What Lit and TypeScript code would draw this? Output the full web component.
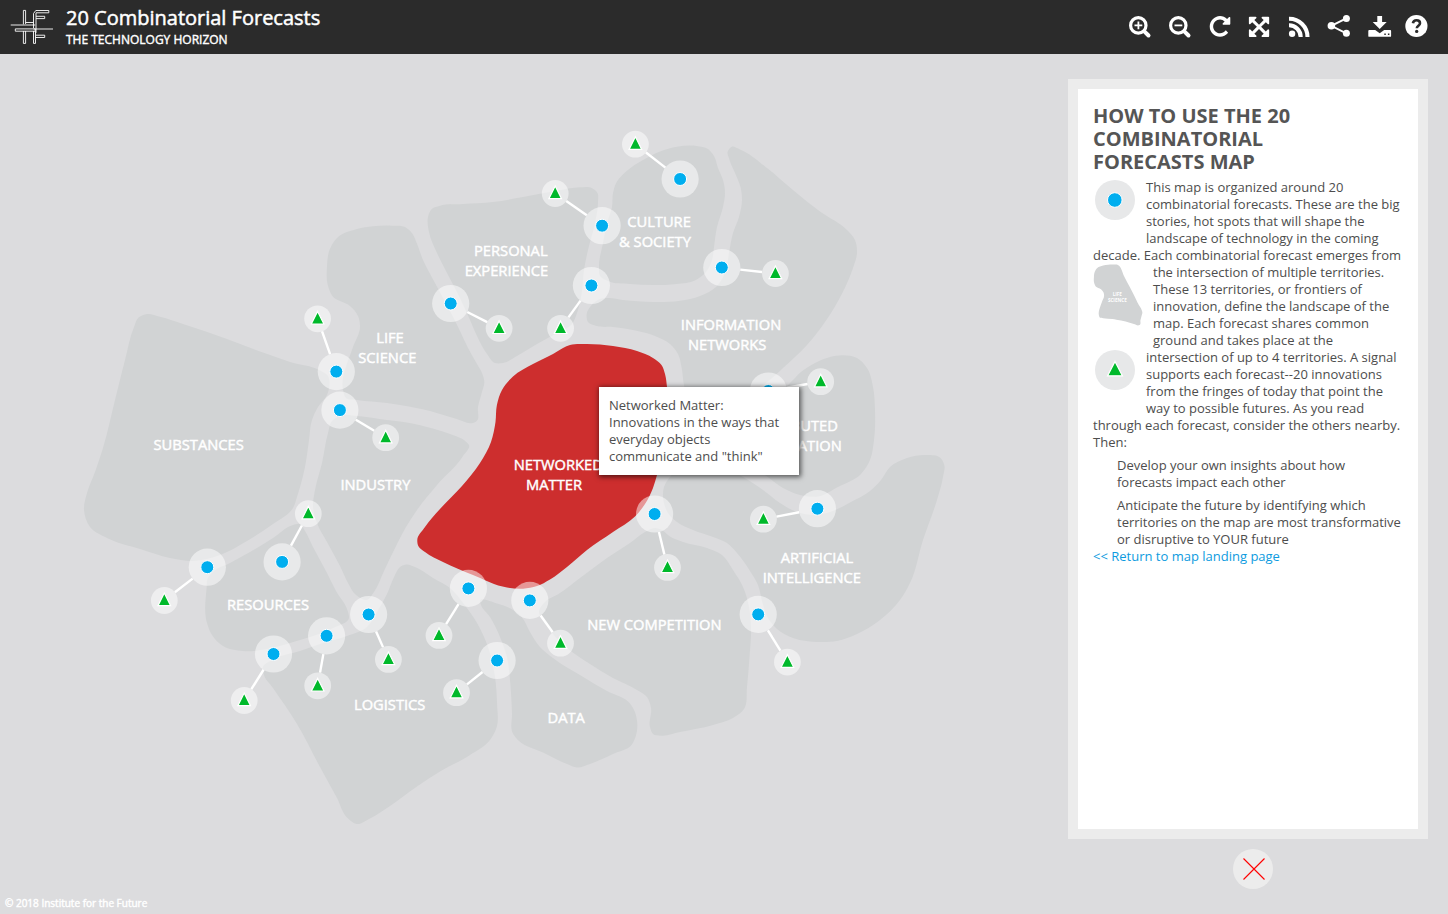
import { LitElement, html, svg, css } from "lit";
import { customElement } from "lit/decorators.js";

type Point = [number, number];

/** Closed smooth curve through the points, tangents scaled to segment length. */
function blob(flat: number[]): string {
  const p: Point[] = [];
  for (let i = 0; i < flat.length; i += 2) p.push([flat[i], flat[i + 1]]);
  const n = p.length;
  const dist = (a: Point, b: Point) => Math.hypot(b[0] - a[0], b[1] - a[1]) || 1;
  const tangent = p.map((c, i) => {
    const a = p[(i + n - 1) % n];
    const b = p[(i + 1) % n];
    const da = dist(a, c);
    const db = dist(c, b);
    const t = [0, 1].map(
      (k) => (((c[k] - a[k]) / da) * db + ((b[k] - c[k]) / db) * da) / (da + db),
    );
    return t as Point;
  });
  let d = `M${p[0][0]} ${p[0][1]}`;
  for (let i = 0; i < n; i++) {
    const j = (i + 1) % n;
    const l = dist(p[i], p[j]) / 3;
    const c = [
      p[i][0] + tangent[i][0] * l,
      p[i][1] + tangent[i][1] * l,
      p[j][0] - tangent[j][0] * l,
      p[j][1] - tangent[j][1] * l,
      p[j][0],
      p[j][1],
    ].map((v) => v.toFixed(1));
    d += `C${c.join(" ")}`;
  }
  return d + "Z";
}

const lifeScience = blob([
  391.7, 225.7, 405, 227, 411.7, 232.7, 416.7, 243, 423, 260, 435, 283, 451, 313, 460, 331, 468, 348, 477, 364,
  482, 373, 484.3, 381.7, 481.7, 393, 478, 407, 476.7, 421, 472.7, 423, 456.7, 419, 430, 411, 400, 405, 387, 403,
  357, 400, 346, 398, 343, 390, 343, 378, 345, 370, 353, 347, 360, 326, 358, 316, 350, 306, 333, 296.7, 327.5, 284,
  327, 267, 329.5, 250, 338, 237, 357, 229, 373, 226.3,
]);

const territories: string[] = [
  blob([
    146, 314.2, 160, 316.7, 183, 324, 227, 339, 263, 352.5, 290, 362, 320, 370.5, 328, 376, 329.5, 385, 327, 395,
    318, 407, 312, 420, 309, 440, 305, 467, 297, 497, 293, 508, 273, 524, 247, 541, 220, 555, 193, 561, 170, 558,
    140, 549, 107, 538, 90, 527, 84, 510, 87, 493, 95, 472, 103, 448, 115, 400, 125, 360, 134, 327, 138.5, 317.5,
  ]),
  lifeScience,
  blob([
    428, 217, 431.7, 209, 440, 205.7, 463, 204, 493, 202, 523, 197, 557, 190.7, 580, 187.3, 591.7, 188,
    597.5, 193, 598, 202, 595, 223, 588, 250, 584, 270, 581.7, 293, 577, 313, 572, 324, 557, 333, 537, 344,
    517, 356, 503, 363, 495, 363, 487, 354, 477, 336, 470, 320, 460, 298, 447, 273, 437, 253, 429, 232,
  ]),
  blob([
    696.7, 146, 708, 149, 714, 156, 718, 168, 723, 180, 725, 193, 723, 207, 717, 227, 714, 247, 712, 260, 706, 272,
    695, 280.5, 677, 284, 653, 285, 630, 284, 608, 281, 600, 276, 599, 267, 603, 243, 608, 220, 612, 207, 613, 193,
    616.7, 182, 626.7, 171, 643, 160, 660, 151.5, 677, 146.7,
  ]),
  blob([
    731.7, 146.7, 740, 149.5, 767, 168, 793, 190, 820, 211.5, 847, 230, 855, 240, 857, 253, 853, 268, 843, 291.7,
    825, 322, 807, 345, 783, 368, 767, 382, 735, 398, 700, 400, 687, 396, 684, 385, 681.5, 367, 678, 354,
    670, 344, 655, 336, 633, 330, 613, 327, 597, 326, 588, 322, 586.7, 314, 591.7, 305, 600, 299, 608, 298,
    623, 300, 653, 302, 680, 300.7, 700, 296, 716, 287, 725, 273, 729, 253, 733, 233, 739, 217, 742, 200,
    740.5, 187, 735, 173, 729.5, 160, 727.7, 151.5,
  ]),
  blob([
    843, 355.3, 857, 358, 867, 368, 873, 387, 875, 410, 874, 440, 870, 460, 861, 474, 838, 487, 818, 496.5,
    800, 495, 783, 488, 765, 475, 740, 462, 700, 450, 690, 430, 700, 415, 740, 408, 775, 397, 791, 382, 801, 372,
    815, 363, 830, 357,
  ]),
  blob([
    670, 477, 664, 487, 663.5, 501, 668, 513, 677, 522, 693, 530, 713, 537, 727, 543, 737, 553, 750, 571, 758, 585,
    762.5, 603, 768, 618, 777, 629, 793, 638, 820, 642, 837, 641, 857, 634, 880, 620, 900, 600, 910, 583, 923, 540,
    937, 500, 943, 477, 944.3, 465, 940, 457.5, 927, 455, 907, 458, 890, 467, 881, 480, 870, 491, 850, 502.5,
    830, 512, 817, 515, 797, 512, 780, 503, 763, 490, 743, 477, 715, 465, 685, 465,
  ]),
  blob([
    655, 528, 645, 532, 630, 543, 607, 558, 580, 578, 560, 593, 545, 602, 539, 611, 545, 623, 553, 634, 567, 648,
    590, 664, 613, 678, 637, 690, 647, 697, 651, 708, 650, 727, 653, 734, 661, 735.7, 680, 732, 713, 725, 733, 718,
    744, 709, 747, 687, 749.5, 657, 751, 627, 749, 607, 743, 587, 733, 570, 722, 555, 707, 548, 683, 542, 670, 536.5,
    662, 530,
  ]),
  blob([
    480, 601, 497, 603.5, 513, 610, 521.7, 617, 530, 632, 540, 647, 553, 658, 580, 675, 607, 691, 630, 703.5,
    634.5, 711, 635.5, 737, 631.5, 745, 613, 754, 590, 764, 577, 767.5, 567, 764, 543, 752.5, 519, 741, 512.7, 733,
    512, 713, 510, 680, 507, 657, 500, 637, 490, 617, 481, 605,
  ]),
  blob([
    406.7, 564.5, 415, 567, 433, 578, 450, 588, 463, 603, 477, 623, 488, 647, 495, 677, 497, 703, 496.7, 727,
    490, 740, 470, 755, 440, 771.5, 417, 786.5, 390, 806, 370, 818.5, 356.7, 824, 347.5, 818, 337, 798, 320, 767,
    297, 724, 273, 688, 264, 675, 263, 667, 272, 660, 300, 651, 323, 643, 347, 636, 367, 627, 377, 612, 387, 594,
    395, 575, 400, 567,
  ]),
  blob([
    206.7, 587, 207, 623, 212, 635, 223, 646, 243, 651, 267, 649, 290, 643, 310, 637, 333, 628, 349, 618, 347, 609,
    336, 591, 327, 573, 313, 547, 305, 531, 300, 524, 293, 525, 273, 538, 250, 552, 230, 563, 214, 571, 207.5, 579,
  ]),
  blob([
    357, 416, 340, 416, 332, 421, 328, 433, 322, 463, 315, 490, 313, 507, 317, 523, 327, 542, 340, 566, 348, 583,
    356, 595, 367, 600, 374, 592, 384, 571, 398, 542, 406, 527, 417, 510, 437, 485, 463, 456, 469, 445, 466, 441.7,
    450, 434, 427, 427, 400, 421.5, 387, 420,
  ]),
];

const networkedMatter = blob([
  570, 345, 587, 344, 613, 346, 637, 351, 653, 358, 661.5, 365, 665, 374, 667, 387, 667, 430, 657, 475, 653, 488,
  645, 504, 635, 516.5, 613, 532, 587, 550, 567, 567, 550, 579.5, 537, 586, 523, 588.7, 507, 587.5, 473, 575,
  443, 562, 425, 552, 418.3, 546, 417.3, 540, 425, 527, 440, 509, 462, 486, 480, 463, 491, 442, 495.5, 422,
  496.9, 405, 502, 390, 513, 376.5, 533, 364, 553, 354, 563, 348,
]);

/** Forecast x, y followed by its signal's x, y. */
const pairs: number[][] = [
  [336.3, 371.6, 317.6, 318.8],
  [339.9, 410.1, 385.7, 437.7],
  [282.1, 561.9, 308.3, 513.7],
  [207.3, 567.2, 164.3, 600.5],
  [450.7, 303.5, 499.1, 328.3],
  [602.1, 225.7, 555.2, 193.5],
  [591.4, 285.5, 560.6, 328.3],
  [680.1, 179, 635.4, 144.2],
  [721.8, 267.5, 775.4, 273.5],
  [768.3, 391, 820.7, 381.7],
  [817.4, 508.7, 763.4, 519.2],
  [654.6, 514, 667.5, 567.4],
  [758.2, 614.4, 787.4, 662.1],
  [529.8, 600.4, 560.5, 643.2],
  [468.4, 588.4, 439, 635.4],
  [497.1, 660.5, 456.5, 692.7],
  [368.6, 614.5, 388.4, 659.4],
  [326.6, 635.8, 317.7, 685.8],
  [273.5, 654, 244.2, 700.5],
];

const labels: [string, number, number][] = [
  ["SUBSTANCES", 198.6, 450],
  ["LIFE", 390, 343],
  ["SCIENCE", 387.3, 363],
  ["INDUSTRY", 375.4, 490],
  ["PERSONAL", 510.8, 256],
  ["EXPERIENCE", 506.4, 276],
  ["CULTURE", 659, 227],
  ["& SOCIETY", 655, 247],
  ["INFORMATION", 731, 330],
  ["NETWORKS", 727.2, 350],
  ["NETWORKED", 558.3, 470],
  ["MATTER", 554, 490],
  ["DISTRIBUTED", 792.3, 431],
  ["COMPUTATION", 789, 451],
  ["ARTIFICIAL", 817, 563],
  ["INTELLIGENCE", 811.8, 583],
  ["NEW COMPETITION", 654.4, 630],
  ["DATA", 566.2, 723],
  ["LOGISTICS", 389.7, 710],
  ["RESOURCES", 268, 610],
];

const HALO = 18.6;
const SIGNAL_HALO = 13.4;

const icons = [
  svg`<circle cx="13.300" cy="13.400" r="7.700" fill="none" stroke="#fff" stroke-width="3.200"/>
    <path d="M19.300 19.300L23.500 23.500" stroke="#fff" stroke-width="4" stroke-linecap="round"/>
    <path d="M9.500 13.400h7.800M13.400 9.500v7.800" stroke="#fff" stroke-width="1.800"/>`,
  svg`<circle cx="13.300" cy="13.400" r="7.700" fill="none" stroke="#fff" stroke-width="3.200"/>
    <path d="M19.300 19.300L23.500 23.500" stroke="#fff" stroke-width="4" stroke-linecap="round"/>
    <path d="M9.500 13.400h7.800" stroke="#fff" stroke-width="1.800"/>`,
  svg`<path transform="translate(3 2.400) scale(.0134)" fill="#fff" d="M1664 256v448q0 26-19 45t-45 19h-448q-42 0-59-40-17-39 14-69l138-138q-148-137-349-137-104 0-198.500 40.500t-163.500 109.500-109.500 163.500-40.500 198.500 40.500 198.500 109.500 163.500 163.500 109.500 198.500 40.500q119 0 225-52t179-147q7-10 23-12 15 0 25 9l137 138q9 8 9.500 20.500t-7.500 22.500q-109 132-264 204.500t-327 72.500q-156 0-298-61t-245-164-164-245-61-298 61-298 164-245 245-164 298-61q147 0 284.500 55.500t244.500 156.500l130-129q29-31 70-14 39 17 39 59z"/>`,
  svg`<path transform="translate(2.200 3) scale(.0132)" fill="#fff" d="M1411 541l-355 355 355 355 144-144q29-31 70-14 39 17 39 59v448q0 26-19 45t-45 19h-448q-42 0-59-40-17-39 14-69l144-144-355-355-355 355 144 144q31 30 14 69-17 40-59 40h-448q-26 0-45-19t-19-45v-448q0-42 40-59 39-17 69 14l144 144 355-355-355-355-144 144q-19 19-45 19-12 0-24-5-40-17-40-59v-448q0-26 19-45t45-19h448q42 0 59 40 17 39-14 69l-144 144 355 355 355-355-144-144q-31-30-14-69 17-40 59-40h448q26 0 45 19t19 45v448q0 42-39 59-13 5-25 5-26 0-45-19z"/>`,
  svg`<circle cx="7.100" cy="21.800" r="3.200" fill="#fff"/>
    <path d="M4 6.700A18.300 18.300 0 0 1 22.500 25M4 13.300A11.600 11.600 0 0 1 15.700 25" fill="none" stroke="#fff" stroke-width="4.100"/>`,
  svg`<path d="M21.300 6.400L6.300 13.800l15 7.500" fill="none" stroke="#fff" stroke-width="1.900"/>
    <g fill="#fff"><circle cx="6.400" cy="13.800" r="3.800"/><circle cx="21.400" cy="6.400" r="3.500"/><circle cx="21.400" cy="21.300" r="3.500"/></g>`,
  svg`<path d="M12.300 4h4.800v6h4.600l-7 7-7-7h4.600z" fill="#fff"/>
    <path d="M4.200 18h6l4.500 3.300 4.500-3.300h6q.9 0 .9.900v5q0 .9-.9.900h-21q-.9 0-.9-.900v-5q0-.9.9-.9z" fill="#fff"/>
    <path d="M19.300 21.500h1.500v1.400h-1.500zM22.900 21.500h1.500v1.400h-1.500z" fill="#2b2b2b"/>`,
  svg`<circle cx="11.400" cy="14" r="11.100" fill="#fff"/>
    <path d="M7.900 11.300c.4-2 1.700-3 3.600-3 2.100 0 3.500 1.200 3.500 2.900 0 2.500-3.200 2.600-3.200 5.100" fill="none" stroke="#2b2b2b" stroke-width="2.600"/>
    <circle cx="11.700" cy="19.400" r="1.650" fill="#2b2b2b"/>`,
];

@customElement("signal-map")
class SignalMap extends LitElement {
  static styles = css`
    :host {
      display: block;
      position: relative;
    }
    .canvas {
      display: block;
    }
    .land {
      fill: #d1d3d4;
    }
    .active {
      fill: #cd2e2e;
    }
    .label {
      fill: #fff;
      font: 400 14.7px "Open Sans", "Noto Sans", sans-serif;
      text-anchor: middle;
      stroke: #fff;
      stroke-width: 0.45px;
    }
    .link {
      stroke: #fff;
      stroke-width: 2.4px;
    }
    .halo {
      fill: #fff;
      fill-opacity: 0.5;
    }
    .forecast {
      fill: #00aeef;
      stroke: #fff;
      stroke-width: 1px;
    }
    .signal {
      fill: #00b92b;
      stroke: #fff;
      stroke-width: 1.2px;
    }
    .tooltip {
      position: absolute;
      left: 599px;
      top: 333px;
      box-sizing: border-box;
      width: 200px;
      height: 88px;
      padding: 10px;
      background: #fff;
      color: #4d4d4d;
      font-size: 13px;
      line-height: 17px;
      white-space: nowrap;
      box-shadow: 1px 1px 5px 1px rgba(0, 0, 0, 0.6);
    }
  `;

  private pair([x, y, sx, sy]: number[]) {
    const d = Math.hypot(sx - x, sy - y);
    const ux = (sx - x) / d;
    const uy = (sy - y) / d;
    return svg`
      <line class="link" x1=${x + ux * HALO} y1=${y + uy * HALO}
        x2=${sx - ux * SIGNAL_HALO} y2=${sy - uy * SIGNAL_HALO}></line>
      <circle class="halo" cx=${x} cy=${y} r=${HALO}></circle>
      <circle class="forecast" cx=${x} cy=${y} r="6.500"></circle>
      <circle class="halo" cx=${sx} cy=${sy} r=${SIGNAL_HALO}></circle>
      <path class="signal" d="M${sx} ${sy - 7.4}l6.300 12.600h-12.600z"></path>`;
  }

  render() {
    return html`
      <svg class="canvas" width="1068" height="836" viewBox="0 54 1068 836">
        ${territories.map((d) => svg`<path class="land" d=${d}></path>`)}
        <path class="active" d=${networkedMatter}></path>
        ${labels.map(([t, x, y]) => svg`<text class="label" x=${x} y=${y - 0.4}>${t}</text>`)}
        ${pairs.map((p) => this.pair(p))}
      </svg>
      <div class="tooltip">
        Networked Matter:<br />Innovations in the ways that<br />everyday objects<br />communicate and "think"
      </div>
    `;
  }
}

@customElement("help-panel")
class HelpPanel extends LitElement {
  static styles = css`
    :host {
      display: flex;
      flex-direction: column;
      align-items: center;
      gap: 10px;
    }
    .panel {
      box-sizing: border-box;
      width: 360px;
      height: 760px;
      border: 10px solid #ececec;
      background: #fff;
      padding: 15px;
      color: #4d4d4d;
      font-size: 13px;
      line-height: 17px;
      white-space: nowrap;
    }
    .heading {
      margin: 0 0 6px;
      color: #555;
      font-size: 20px;
      line-height: 23px;
      font-weight: 700;
    }
    .copy {
      margin: 0;
    }
    .marker {
      float: left;
      width: 53px;
      height: 60px;
    }
    .shape {
      float: left;
      width: 60px;
      height: 75px;
    }
    .tiny {
      fill: #fff;
      font: 700 15px "Open Sans", sans-serif;
      text-anchor: middle;
    }
    .tips {
      list-style: none;
      margin: 0;
      padding: 0 0 0 24px;
    }
    .tip {
      margin-top: 6px;
    }
    .back {
      color: #0d9be0;
      text-decoration: none;
    }
    .close {
      display: block;
      margin-left: 10px;
    }
  `;

  render() {
    return html`
      <section class="panel">
        <h2 class="heading">HOW TO USE THE 20<br />COMBINATORIAL<br />FORECASTS MAP</h2>
        <p class="copy">
          <svg class="marker" viewBox="0 0 53 60">
            <circle cx="22" cy="21" r="20" fill="#e7e8e9" />
            <circle cx="21.800" cy="21" r="7.300" fill="#00aeef" stroke="#fff" />
          </svg>
          This map is organized around 20<br />combinatorial forecasts. These are the big<br />stories, hot spots
          that will shape the<br />landscape of technology in the coming<br />decade. Each combinatorial forecast
          emerges from<br /><svg class="shape" viewBox="0 0 60 75">
            <g transform="translate(-99.800 -69) scale(.308)">
              <path d=${lifeScience} fill="#d1d3d4" />
              <text class="tiny" x="403" y="328">LIFE</text>
              <text class="tiny" x="403" y="347">SCIENCE</text>
            </g></svg
          >the intersection of multiple territories.<br />These 13 territories, or frontiers of<br />innovation,
          define the landscape of the<br />map. Each forecast shares common<br />ground and takes place at the<br /><svg
            class="marker"
            viewBox="0 0 53 60"
          >
            <circle cx="22" cy="21" r="20" fill="#e7e8e9" />
            <path d="M22 12.500l7.400 14.300h-14.800z" fill="#00b92b" stroke="#fff" stroke-width="1.300" /></svg
          >intersection of up to 4 territories. A signal<br />supports each forecast--20 innovations<br />from the
          fringes of today that point the<br />way to possible futures. As you read<br />through each forecast,
          consider the others nearby.<br />Then:
        </p>
        <ul class="tips">
          <li class="tip">Develop your own insights about how<br />forecasts impact each other</li>
          <li class="tip">
            Anticipate the future by identifying which<br />territories on the map are most transformative<br />or
            disruptive to YOUR future
          </li>
        </ul>
        <a class="back">&lt;&lt; Return to map landing page</a>
      </section>
      <svg class="close" width="40" height="40" viewBox="0 0 40 40">
        <circle cx="20" cy="20" r="20" fill="#ececec" />
        <path d="M10.500 9.500l21 21M31.500 9.500l-21 21" stroke="#f00" stroke-width="1.100" />
      </svg>
    `;
  }
}

@customElement("app-root")
class AppRoot extends LitElement {
  static styles = css`
    :host {
      display: flex;
      flex-direction: column;
      height: 914px;
      overflow: hidden;
      background: #dcdcde;
      font-family: "Open Sans", "Noto Sans", sans-serif;
    }
    .bar {
      display: flex;
      align-items: center;
      box-sizing: border-box;
      height: 54px;
      padding: 0 13px 0 10px;
      background: #2b2b2b;
      color: #fff;
    }
    .titles {
      flex: 1;
      margin-left: 12px;
      padding-bottom: 2px;
      white-space: nowrap;
    }
    .title {
      margin: 0;
      font-size: 20px;
      line-height: 27px;
      font-weight: 400;
      -webkit-text-stroke: 0.5px #fff;
    }
    .subtitle {
      font-size: 12px;
      line-height: 18px;
      -webkit-text-stroke: 0.4px #fff;
    }
    .tools {
      display: flex;
      gap: 10px;
    }
    .body {
      display: flex;
      flex: 1;
    }
    .left {
      width: 1068px;
    }
    .help {
      padding-top: 25px;
    }
    .credit {
      padding: 6px 0 0 5px;
      color: #fff;
      font-size: 10px;
      line-height: 14px;
      font-weight: 400;
      -webkit-text-stroke: 0.4px #fff;
    }
  `;

  render() {
    return html`
      <header class="bar">
        <svg width="44" height="40" viewBox="10 7 44 40" fill="none" stroke="#fff" stroke-width=".9">
          <path d="M10.700 25h24.500M33.500 29h19.500" stroke="#aaa" stroke-width="1.700" />
          <path d="M25.600 24V10.400h-2.200v14M23.400 31v12.400h2.200V31M15.300 28.900h20v2.300h-20z" />
          <path d="M25.600 22.500h8M35.500 31v12.400h-2V31M33.500 28V13.500l2.300-3h13v2.300H36v20M36 16.300h8.700v2.300H36M36 35.200h8.700v2.300H35.500" />
        </svg>
        <div class="titles">
          <h1 class="title">20 Combinatorial Forecasts</h1>
          <div class="subtitle">THE TECHNOLOGY HORIZON</div>
        </div>
        <nav class="tools">
          ${icons.map((i) => html`<svg width="30" height="30" viewBox="0 0 30 30">${i}</svg>`)}
        </nav>
      </header>
      <div class="body">
        <div class="left">
          <signal-map></signal-map>
          <footer class="credit">© 2018 Institute for the Future</footer>
        </div>
        <help-panel class="help"></help-panel>
      </div>
    `;
  }
}
